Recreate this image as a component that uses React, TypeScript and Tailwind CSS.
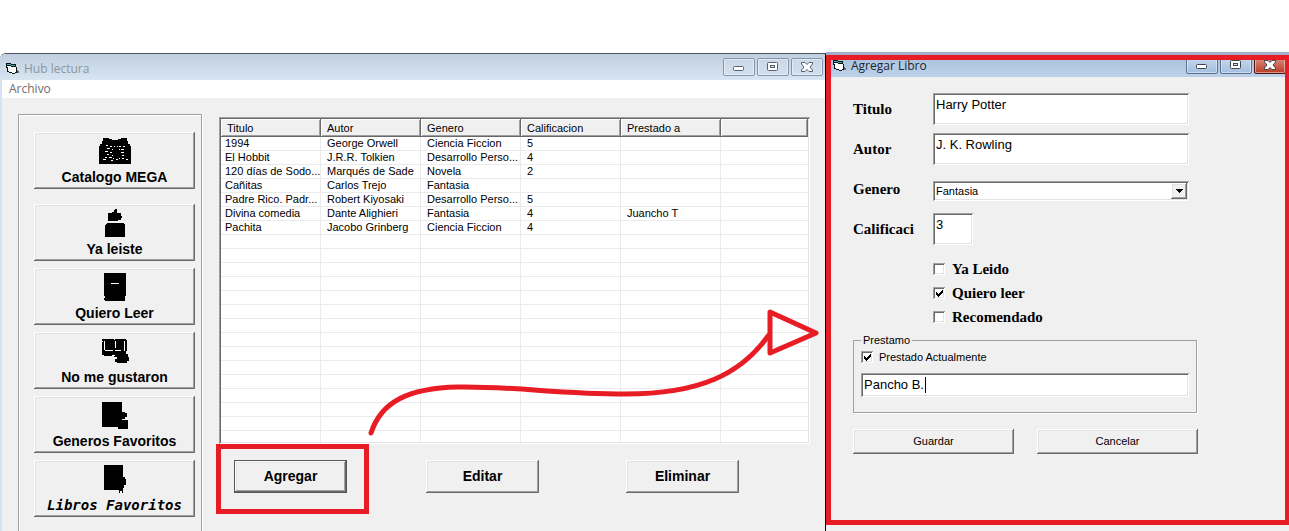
import React from "react";

const RAISED =
  "bg-[#f0f0f0] shadow-[inset_-1px_-1px_0_#696969,inset_1px_1px_0_#ffffff,inset_-2px_-2px_0_#a0a0a0,inset_2px_2px_0_#e3e3e3]";
const SUNKEN =
  "bg-white shadow-[inset_1px_1px_0_#a0a0a0,inset_-1px_-1px_0_#ffffff,inset_2px_2px_0_#696969,inset_-2px_-2px_0_#e3e3e3]";
const SERIF = "font-['Liberation_Serif','Times_New_Roman',serif] text-[15px] leading-4 font-bold";

function FormIcon() {
  return (
    <svg width="14" height="14" viewBox="0 0 14 14" shapeRendering="crispEdges" aria-hidden="true">
      <path d="M0 1h5v1h5v3h1v6h-2v1h-3v-1h-3v-1h-2v-4h-1z" fill="#111" />
      <path d="M1 4h4v1h5v5h-1v1h-3v-1h-3v-1h-1v-4h-1z" fill="#fff" />
      <path d="M1 2h4v1h4v1h-4v-1h-4z" fill="#35b5b5" />
      <path d="M11 8h1v1h1v2h-2z" fill="#666" />
    </svg>
  );
}

function CaptionGlyph({ kind, active }: { kind: string; active: boolean }) {
  const stroke = active ? "#3f4651" : "#55606f";
  if (kind === "close") {
    return (
      <svg width="14" height="12" viewBox="0 0 14 12" aria-hidden="true">
        <path
          d="M1.500 1.500h3.500l2 2 2-2h3.500v1.500l-2.500 3 2.500 3v1.500h-3.500l-2-2-2 2h-3.500v-1.500l2.500-3-2.500-3z"
          fill="#fff"
          stroke={stroke}
        />
      </svg>
    );
  }
  return (
    <svg width="14" height="12" viewBox="0 0 14 12" aria-hidden="true">
      {kind === "min" ? (
        <rect x="1.500" y="5.500" width="10" height="4" rx="1" fill="#fff" stroke={stroke} />
      ) : (
        <>
          <rect x="1.500" y="1.500" width="10" height="8" rx="1" fill="#fff" stroke={stroke} />
          <rect x="4.500" y="4.500" width="4" height="2" fill="#dfe8f2" stroke={stroke} />
        </>
      )}
    </svg>
  );
}

function CaptionButtons({ active = false }: { active?: boolean }) {
  const look = active
    ? "border-[#5c708c] bg-linear-to-b from-[#c9daee] to-[#a3bedd]"
    : "border-[#8795aa] bg-linear-to-b from-[#c9d7e8] to-[#d3e0ef]";
  const closeLook = active ? "border-[#4d1512] bg-linear-to-b from-[#dc9083] to-[#b83a20]" : look;
  const base =
    "flex h-[18px] w-8 items-center justify-center rounded-[2px] border shadow-[inset_0_0_0_1px_rgba(255,255,255,0.45)]";
  return (
    <div className="flex gap-[2px]">
      <button className={`${base} ${look}`} aria-label="Minimizar">
        <CaptionGlyph kind="min" active={active} />
      </button>
      <button className={`${base} ${look}`} aria-label="Maximizar">
        <CaptionGlyph kind="max" active={active} />
      </button>
      <button className={`${base} ${closeLook}`} aria-label="Cerrar">
        <CaptionGlyph kind="close" active={active} />
      </button>
    </div>
  );
}

const ICONS = {
  open: (
    <>
      <path d="M4 1h6v1h3v1h6v-1h3v-1h6v3h1v3h2v2h1v18h-32v-18h1v-2h2v-3h1z" />
      <path
        d="M7 8h2m2 1h2M8 11h3m9-2h2m2 0h2M6 14h3m2 1h2m9-3h3M8 17h2m3 1h1m8-3h3M6 20h2m2 0h3m10-2h2M4 22h3m5 1h2m9-2h2m2 1h2M15 9h1m2 0h1M13 12h1m6 0h1M14 21h1m2 1h2m1-1h1"
        stroke="#fff"
      />
    </>
  ),
  like: (
    <path d="M16 0h2v4h4v3h1v2h-1v2h-3v1h-10v-8h4v-1h2v-2h1zM8 14h17v1h1v13h-20v-12h1v-1h1z" />
  ),
  book: (
    <>
      <path d="M5 0h22v23h-1v5h-20v-1h-1v-2h1v-2h-1z" />
      <path d="M12 10.500h8" stroke="#fff" />
    </>
  ),
  dislike: (
    <>
      <path d="M3 2h12v1h1v-1h11v1h1v11h-1v3h2v3h1v4h-2v2h-10v-1h-2v-3h2v-2h-3v-1h-10v-1h-2v-13h1z" />
      <path d="M5.500 4v9M6 13.500h8M16 13.500h6M25.500 4v10M16.500 4v7M13 18.500h3" stroke="#fff" />
    </>
  ),
  genres: <path d="M3 1h20v10h3v1h2v4h-2v2h-3v1h6v9h-10v-2h-16z" />,
  favorite: <path d="M5 0h19v12h2v2h1v6h-2v3h-1v5h-1v-2h-2v2h-1v-3h-15z" />,
};

const NAV: { label: string; icon: keyof typeof ICONS }[] = [
  { label: "Catalogo MEGA", icon: "open" },
  { label: "Ya leiste", icon: "like" },
  { label: "Quiero Leer", icon: "book" },
  { label: "No me gustaron", icon: "dislike" },
  { label: "Generos Favoritos", icon: "genres" },
  { label: "Libros Favoritos", icon: "favorite" },
];

const HEADERS = ["Titulo", "Autor", "Genero", "Calificacion", "Prestado a", ""];
const BOOKS = [
  ["1994", "George Orwell", "Ciencia Ficcion", "5", ""],
  ["El Hobbit", "J.R.R. Tolkien", "Desarrollo Perso...", "4", ""],
  ["120 días de Sodo...", "Marqués de Sade", "Novela", "2", ""],
  ["Cañitas", "Carlos Trejo", "Fantasia", "", ""],
  ["Padre Rico. Padr...", "Robert Kiyosaki", "Desarrollo Perso...", "5", ""],
  ["Divina comedia", "Dante Alighieri", "Fantasia", "4", "Juancho T"],
  ["Pachita", "Jacobo Grinberg", "Ciencia Ficcion", "4", ""],
];
const ROWS = [...BOOKS, ...Array.from({ length: 15 }, () => ["", "", "", "", ""])];

function BookTable() {
  return (
    <div className={`h-[327px] overflow-hidden p-[2px] ${SUNKEN}`}>
      <table className="w-full table-fixed border-separate border-spacing-0 text-[11px] leading-[13px]">
        <colgroup>
          <col className="w-[100px]" />
          <col className="w-[100px]" />
          <col className="w-[100px]" />
          <col className="w-[100px]" />
          <col className="w-[100px]" />
          <col />
        </colgroup>
        <thead>
          <tr>
            {HEADERS.map((h, i) => (
              <th
                key={i}
                className="h-[18px] bg-[#f0f0f0] p-0 pl-[6px] text-left font-normal shadow-[inset_-1px_-1px_0_#696969,inset_1px_1px_0_#ffffff,inset_-2px_-2px_0_#a0a0a0]"
              >
                {h}
              </th>
            ))}
          </tr>
        </thead>
        <tbody>
          {ROWS.map((row, r) => (
            <tr key={r}>
              {row.map((cell, c) => (
                <td
                  key={c}
                  className={`h-[14px] border-r border-b border-[#ebebeb] p-0 whitespace-nowrap ${
                    c === 0 ? "pl-1" : "pl-[6px]"
                  }`}
                >
                  {cell}
                </td>
              ))}
              <td className="border-b border-[#ebebeb] p-0" />
            </tr>
          ))}
        </tbody>
      </table>
    </div>
  );
}

function HubWindow() {
  const action = `h-[33px] w-[113px] text-[14px] font-bold ${RAISED}`;
  return (
    <section className="relative mt-[53px] flex flex-col rounded-tl-md border-t border-r border-t-[#4b545f] border-r-black bg-[#f0f0f0]">
      <header className="flex h-[26px] items-center justify-between rounded-tl-md bg-linear-to-b from-[#c0cfde] to-[#d8e5f3] pr-[2px] pl-[6px]">
        <h1 className="flex items-center gap-1 pt-1 font-['Open_Sans','Noto_Sans',sans-serif] text-[12px] leading-4 text-[#8d969f]">
          <FormIcon />
          Hub lectura
        </h1>
        <CaptionButtons />
      </header>
      <div className="flex grow flex-col border-l-2 border-[#d3e3f3]">
        <nav className="flex h-[18px] items-center bg-white pl-[7px]">
          <button className="font-['Open_Sans','Noto_Sans',sans-serif] text-[12px] leading-4 text-[#6d6d6d]">
            Archivo
          </button>
        </nav>
        <div className="flex grow gap-[17px] pt-4 pr-[15px] pl-4">
          <aside className="flex w-[184px] shrink-0 flex-col gap-[7px] border border-b-0 border-[#a0a0a0] px-[15px] pt-[17px] shadow-[inset_1px_1px_0_#ffffff,1px_0_0_#ffffff]">
            {NAV.map(({ label, icon }, i) => (
              <button
                key={label}
                className={`flex h-[57px] w-[161px] flex-col items-center pt-[5px] whitespace-nowrap ${RAISED} ${
                  i === 0 ? "mb-2" : ""
                } ${
                  icon === "favorite"
                    ? "font-['DejaVu_Sans_Mono',monospace] text-[14px] leading-4 font-bold italic"
                    : "text-[14px] leading-4 font-bold"
                }`}
              >
                <svg
                  width="32"
                  height="30"
                  viewBox="0 0 32 30"
                  shapeRendering="crispEdges"
                  className="mb-[2px] shrink-0"
                  aria-hidden="true"
                >
                  {ICONS[icon]}
                </svg>
                {label}
              </button>
            ))}
          </aside>
          <main className="min-w-0 grow pt-[3px]">
            <BookTable />
            <div className="flex gap-[79px] pt-4 pl-[15px]">
              <div className="relative">
                <button className={`border border-[#555] ${action}`}>Agregar</button>
                <div className="pointer-events-none absolute -top-4 -left-[18px] h-[70px] w-[153px] border-5 border-[#e81c24]" />
              </div>
              <button className={action}>Editar</button>
              <button className={`ml-2 ${action}`}>Eliminar</button>
            </div>
          </main>
        </div>
      </div>
      <svg
        width="460"
        height="140"
        viewBox="365 300 460 140"
        className="pointer-events-none absolute top-[246px] left-[365px]"
        fill="none"
        stroke="#e81c24"
        strokeWidth="5"
        strokeLinecap="round"
        strokeLinejoin="round"
        aria-hidden="true"
      >
        <path d="M371 433C381 402 408 388 458 387C510 386 560 394 625 394C700 394 741 374 768 336" />
        <path d="M770 312V353L816 333Z" />
      </svg>
    </section>
  );
}

function Check({ id, defaultChecked }: { id: string; defaultChecked?: boolean }) {
  return (
    <span className="grid size-3 shrink-0">
      <input
        id={id}
        type="checkbox"
        defaultChecked={defaultChecked}
        className={`peer col-start-1 row-start-1 size-3 appearance-none ${SUNKEN}`}
      />
      <svg
        viewBox="0 0 12 12"
        className="pointer-events-none invisible col-start-1 row-start-1 size-3 peer-checked:visible"
        shapeRendering="crispEdges"
        aria-hidden="true"
      >
        <path d="M3 5h1v1h1v1h1v-1h1v-1h1v-1h1v-1h1v3h-1v1h-1v1h-1v1h-1v1h-1v-1h-1v-1h-1z" />
      </svg>
    </span>
  );
}

function AddBookWindow() {
  const field = `text-[13px] outline-none ${SUNKEN}`;
  return (
    <section className="relative mt-[52px] flex flex-col border-t-3 border-[#a3afca] bg-[#f0f0f0]">
      <header className="flex h-[22px] items-start justify-between bg-linear-to-b from-[#a9c0da] to-[#bdd2ea] pt-px pr-[3px] pl-[7px]">
        <h2 className="flex items-center gap-1 pt-[2px] font-['Open_Sans','Noto_Sans',sans-serif] text-[12px] leading-4 text-[#1d2530]">
          <FormIcon />
          Agregar Libro
        </h2>
        <CaptionButtons active />
      </header>
      <form className="w-full max-w-[372px] pt-4 pl-[27px]" onSubmit={(e) => e.preventDefault()}>
        <div className="grid grid-cols-[80px_1fr] items-center gap-y-2 pr-[9px]">
          <label htmlFor="titulo" className={SERIF}>
            Titulo
          </label>
          <input id="titulo" defaultValue="Harry Potter" className={`h-8 w-full px-[3px] pb-[10px] ${field}`} />
          <label htmlFor="autor" className={SERIF}>
            Autor
          </label>
          <input id="autor" defaultValue="J. K. Rowling" className={`h-8 w-full px-[3px] pb-[10px] ${field}`} />
          <label htmlFor="genero" className={SERIF}>
            Genero
          </label>
          <div className="flex h-8 items-center pt-1">
            <div className="grid h-5 w-full items-center">
              <select
                id="genero"
                className={`col-start-1 row-start-1 h-5 w-full appearance-none px-[3px] text-[11px] outline-none ${SUNKEN}`}
              >
                <option>Fantasia</option>
                <option>Novela</option>
                <option>Ciencia Ficcion</option>
              </select>
              <span
                className={`pointer-events-none col-start-1 row-start-1 mr-[2px] flex h-4 w-4 items-center justify-center justify-self-end ${RAISED}`}
              >
                <svg width="7" height="4" viewBox="0 0 7 4" shapeRendering="crispEdges" aria-hidden="true">
                  <path d="M0 0h7v1h-1v1h-1v1h-1v1h-1v-1h-1v-1h-1v-1h-1z" />
                </svg>
              </span>
            </div>
          </div>
          <label htmlFor="calificacion" className={SERIF}>
            Calificaci
          </label>
          <input id="calificacion" defaultValue="3" className={`h-8 w-10 px-[3px] pb-[10px] ${field}`} />
        </div>
        <div className="flex flex-col pt-3 pl-20">
          <div className="flex h-6 items-center gap-[7px]">
            <Check id="leido" />
            <label htmlFor="leido" className={SERIF}>
              Ya Leido
            </label>
          </div>
          <div className="flex h-6 items-center gap-[7px]">
            <Check id="quiero" defaultChecked />
            <label htmlFor="quiero" className={SERIF}>
              Quiero leer
            </label>
          </div>
          <div className="flex h-6 items-center gap-[7px]">
            <Check id="recomendado" />
            <label htmlFor="recomendado" className={SERIF}>
              Recomendado
            </label>
          </div>
        </div>
        <fieldset className="mt-1 mr-px flex flex-col gap-[9px] border border-[#a0a0a0] px-[7px] pt-[3px] pb-[15px] text-[11px] leading-[14px] shadow-[1px_1px_0_#ffffff]">
          <legend className="px-[2px]">Prestamo</legend>
          <div className="flex items-center gap-[6px]">
            <Check id="prestado" defaultChecked />
            <label htmlFor="prestado">Prestado Actualmente</label>
          </div>
          <div className="relative">
            <input
              aria-label="Prestado a"
              defaultValue="Pancho B."
              className={`h-6 w-full px-[3px] pb-[2px] ${field}`}
            />
            <span className="absolute top-1 left-16 h-4 w-px bg-black" />
          </div>
        </fieldset>
        <div className="grid grid-cols-2 gap-[23px] pt-4 text-[11px]">
          <button className={`h-[25px] ${RAISED}`}>Guardar</button>
          <button className={`h-[25px] ${RAISED}`}>Cancelar</button>
        </div>
      </form>
      <div className="pointer-events-none absolute inset-x-0 top-0 bottom-[6px] border-5 border-r-4 border-[#e81c24]" />
    </section>
  );
}

export default function App() {
  return (
    <div className="grid min-h-screen grid-cols-[minmax(0,826fr)_minmax(0,463fr)] overflow-hidden bg-white font-['Liberation_Sans',Arial,sans-serif] text-black">
      <HubWindow />
      <AddBookWindow />
    </div>
  );
}
